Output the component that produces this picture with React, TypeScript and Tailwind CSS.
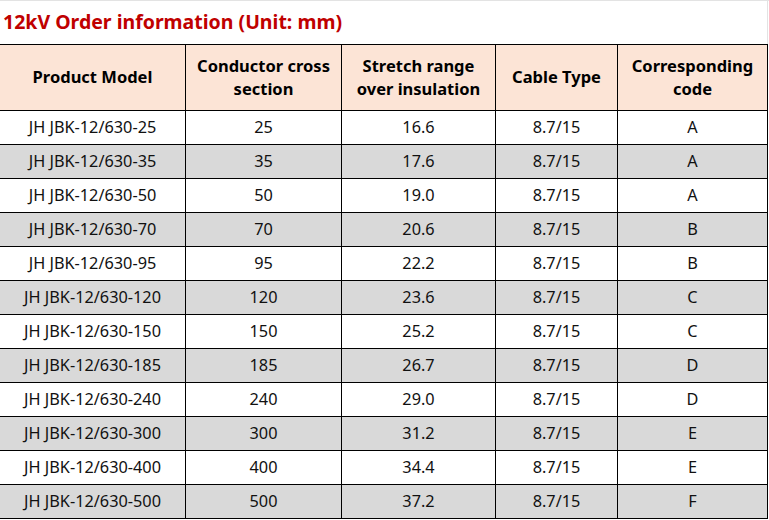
const rows: [string, string, string, string, string][] = [
  ["JH JBK-12/630-25", "25", "16.6", "8.7/15", "A"],
  ["JH JBK-12/630-35", "35", "17.6", "8.7/15", "A"],
  ["JH JBK-12/630-50", "50", "19.0", "8.7/15", "A"],
  ["JH JBK-12/630-70", "70", "20.6", "8.7/15", "B"],
  ["JH JBK-12/630-95", "95", "22.2", "8.7/15", "B"],
  ["JH JBK-12/630-120", "120", "23.6", "8.7/15", "C"],
  ["JH JBK-12/630-150", "150", "25.2", "8.7/15", "C"],
  ["JH JBK-12/630-185", "185", "26.7", "8.7/15", "D"],
  ["JH JBK-12/630-240", "240", "29.0", "8.7/15", "D"],
  ["JH JBK-12/630-300", "300", "31.2", "8.7/15", "E"],
  ["JH JBK-12/630-400", "400", "34.4", "8.7/15", "E"],
  ["JH JBK-12/630-500", "500", "37.2", "8.7/15", "F"],
];

const headers = [
  ["Product Model"],
  ["Conductor cross", "section"],
  ["Stretch range", "over insulation"],
  ["Cable Type"],
  ["Corresponding", "code"],
];

const cols = "grid grid-cols-[186px_156px_154px_122px_150px]";

export default function App() {
  return (
    <div
      className="w-[769px] h-[520px] bg-white border-t border-[#e3e3e3] overflow-hidden"
      style={{ fontFamily: '"Noto Sans", "Open Sans", sans-serif' }}
    >
      <div className="h-[43px] flex items-center pl-[3px] pb-[2px] border-r border-[#e3e3e3] w-[768px]">
        <h1 className="text-[19.5px] font-bold text-[#c00000] leading-none">
          12kV Order information (Unit: mm)
        </h1>
      </div>

      <div className="w-[768px] border-t border-black">
        {/* Header */}
        <div className={`${cols} h-[66px] bg-[#fce4d6]`}>
          {headers.map((h, i) => (
            <div
              key={i}
              className="border-r border-b border-black flex flex-col items-center justify-center pb-[2px] text-[16.5px] font-bold text-black leading-[23px]"
            >
              {h.map((line) => (
                <span key={line}>{line}</span>
              ))}
            </div>
          ))}
        </div>

        {/* Body */}
        {rows.map((r, i) => (
          <div
            key={r[0]}
            className={`${cols} h-[34px] ${i % 2 === 1 ? "bg-[#d9d9d9]" : "bg-white"}`}
          >
            {r.map((c, j) => (
              <div
                key={j}
                className="border-r border-b border-black flex items-center justify-center pb-[1px] text-[16.3px] text-[#111]"
              >
                {c}
              </div>
            ))}
          </div>
        ))}
      </div>
    </div>
  );
}
